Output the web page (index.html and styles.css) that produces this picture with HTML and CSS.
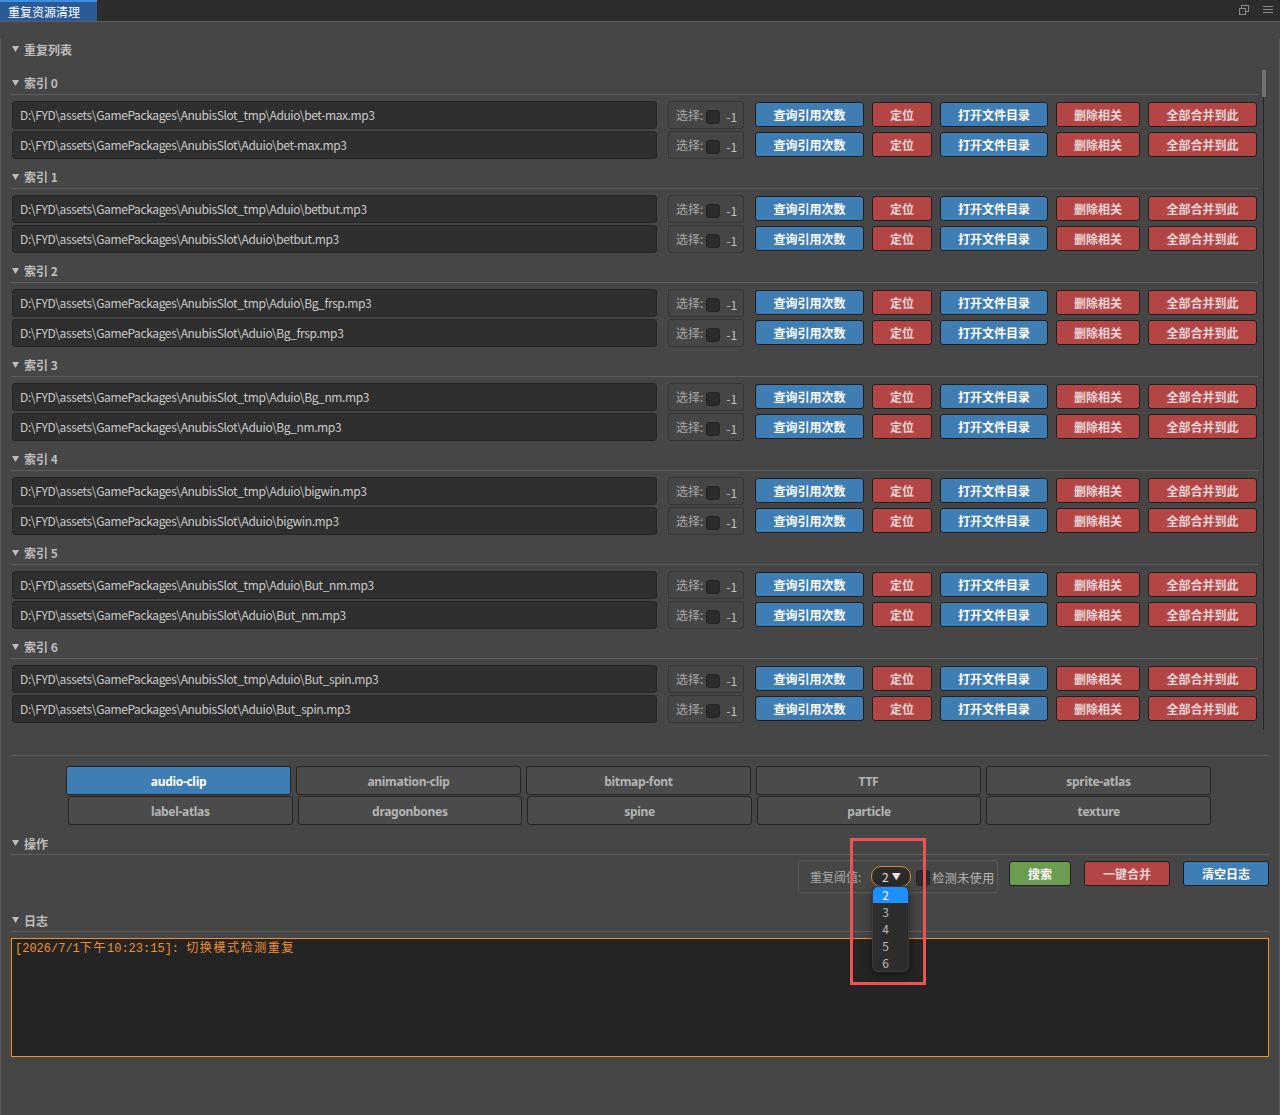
FILE: index.html
```html
<!DOCTYPE html>
<html lang="zh-CN">
<head>
<meta charset="utf-8">
<title>重复资源清理</title>
<link rel="stylesheet" href="styles.css">
</head>
<body>
<div class="titlebar">
  <div class="title-tab">重复资源清理</div>
  <div class="title-icons">
    <svg width="12" height="12" viewBox="0 0 12 12"><rect x="3.5" y="1.5" width="7" height="6" fill="none" stroke="#8a8a8a"/><rect x="1.5" y="4.5" width="6" height="6" fill="#2e2e2e" stroke="#8a8a8a"/></svg>
    <svg width="12" height="12" viewBox="0 0 12 12"><path d="M1 2.5h10M1 5.5h10M1 8.5h10" stroke="#8a8a8a" stroke-width="1.2"/></svg>
  </div>
</div>
<div class="panel">
  <div class="sec-head top"><svg class="tri" width="7" height="6" viewBox="0 0 7 6"><polygon points="0,0 7,0 3.5,6" fill="#bdbdbd"/></svg>重复列表</div>
  <div class="scroll">
    <div class="list">
      <div class="group">
        <div class="g-head"><svg class="tri" width="7" height="6" viewBox="0 0 7 6"><polygon points="0,0 7,0 3.5,6" fill="#bdbdbd"/></svg>索引 0</div>
        <div class="rows">
          <div class="row"><div class="path">D:\FYD\assets\GamePackages\AnubisSlot_tmp\Aduio\bet-max.mp3</div><div class="sel">选择:<span class="cb"></span><span class="num">-1</span></div><div class="btns"><span class="btn blue w1">查询引用次数</span><span class="btn red w2">定位</span><span class="btn blue w3">打开文件目录</span><span class="btn red w4">删除相关</span><span class="btn red w5">全部合并到此</span></div></div>
          <div class="row"><div class="path">D:\FYD\assets\GamePackages\AnubisSlot\Aduio\bet-max.mp3</div><div class="sel">选择:<span class="cb"></span><span class="num">-1</span></div><div class="btns"><span class="btn blue w1">查询引用次数</span><span class="btn red w2">定位</span><span class="btn blue w3">打开文件目录</span><span class="btn red w4">删除相关</span><span class="btn red w5">全部合并到此</span></div></div>
        </div>
      </div>
      <div class="group">
        <div class="g-head"><svg class="tri" width="7" height="6" viewBox="0 0 7 6"><polygon points="0,0 7,0 3.5,6" fill="#bdbdbd"/></svg>索引 1</div>
        <div class="rows">
          <div class="row"><div class="path">D:\FYD\assets\GamePackages\AnubisSlot_tmp\Aduio\betbut.mp3</div><div class="sel">选择:<span class="cb"></span><span class="num">-1</span></div><div class="btns"><span class="btn blue w1">查询引用次数</span><span class="btn red w2">定位</span><span class="btn blue w3">打开文件目录</span><span class="btn red w4">删除相关</span><span class="btn red w5">全部合并到此</span></div></div>
          <div class="row"><div class="path">D:\FYD\assets\GamePackages\AnubisSlot\Aduio\betbut.mp3</div><div class="sel">选择:<span class="cb"></span><span class="num">-1</span></div><div class="btns"><span class="btn blue w1">查询引用次数</span><span class="btn red w2">定位</span><span class="btn blue w3">打开文件目录</span><span class="btn red w4">删除相关</span><span class="btn red w5">全部合并到此</span></div></div>
        </div>
      </div>
      <div class="group">
        <div class="g-head"><svg class="tri" width="7" height="6" viewBox="0 0 7 6"><polygon points="0,0 7,0 3.5,6" fill="#bdbdbd"/></svg>索引 2</div>
        <div class="rows">
          <div class="row"><div class="path">D:\FYD\assets\GamePackages\AnubisSlot_tmp\Aduio\Bg_frsp.mp3</div><div class="sel">选择:<span class="cb"></span><span class="num">-1</span></div><div class="btns"><span class="btn blue w1">查询引用次数</span><span class="btn red w2">定位</span><span class="btn blue w3">打开文件目录</span><span class="btn red w4">删除相关</span><span class="btn red w5">全部合并到此</span></div></div>
          <div class="row"><div class="path">D:\FYD\assets\GamePackages\AnubisSlot\Aduio\Bg_frsp.mp3</div><div class="sel">选择:<span class="cb"></span><span class="num">-1</span></div><div class="btns"><span class="btn blue w1">查询引用次数</span><span class="btn red w2">定位</span><span class="btn blue w3">打开文件目录</span><span class="btn red w4">删除相关</span><span class="btn red w5">全部合并到此</span></div></div>
        </div>
      </div>
      <div class="group">
        <div class="g-head"><svg class="tri" width="7" height="6" viewBox="0 0 7 6"><polygon points="0,0 7,0 3.5,6" fill="#bdbdbd"/></svg>索引 3</div>
        <div class="rows">
          <div class="row"><div class="path">D:\FYD\assets\GamePackages\AnubisSlot_tmp\Aduio\Bg_nm.mp3</div><div class="sel">选择:<span class="cb"></span><span class="num">-1</span></div><div class="btns"><span class="btn blue w1">查询引用次数</span><span class="btn red w2">定位</span><span class="btn blue w3">打开文件目录</span><span class="btn red w4">删除相关</span><span class="btn red w5">全部合并到此</span></div></div>
          <div class="row"><div class="path">D:\FYD\assets\GamePackages\AnubisSlot\Aduio\Bg_nm.mp3</div><div class="sel">选择:<span class="cb"></span><span class="num">-1</span></div><div class="btns"><span class="btn blue w1">查询引用次数</span><span class="btn red w2">定位</span><span class="btn blue w3">打开文件目录</span><span class="btn red w4">删除相关</span><span class="btn red w5">全部合并到此</span></div></div>
        </div>
      </div>
      <div class="group">
        <div class="g-head"><svg class="tri" width="7" height="6" viewBox="0 0 7 6"><polygon points="0,0 7,0 3.5,6" fill="#bdbdbd"/></svg>索引 4</div>
        <div class="rows">
          <div class="row"><div class="path">D:\FYD\assets\GamePackages\AnubisSlot_tmp\Aduio\bigwin.mp3</div><div class="sel">选择:<span class="cb"></span><span class="num">-1</span></div><div class="btns"><span class="btn blue w1">查询引用次数</span><span class="btn red w2">定位</span><span class="btn blue w3">打开文件目录</span><span class="btn red w4">删除相关</span><span class="btn red w5">全部合并到此</span></div></div>
          <div class="row"><div class="path">D:\FYD\assets\GamePackages\AnubisSlot\Aduio\bigwin.mp3</div><div class="sel">选择:<span class="cb"></span><span class="num">-1</span></div><div class="btns"><span class="btn blue w1">查询引用次数</span><span class="btn red w2">定位</span><span class="btn blue w3">打开文件目录</span><span class="btn red w4">删除相关</span><span class="btn red w5">全部合并到此</span></div></div>
        </div>
      </div>
      <div class="group">
        <div class="g-head"><svg class="tri" width="7" height="6" viewBox="0 0 7 6"><polygon points="0,0 7,0 3.5,6" fill="#bdbdbd"/></svg>索引 5</div>
        <div class="rows">
          <div class="row"><div class="path">D:\FYD\assets\GamePackages\AnubisSlot_tmp\Aduio\But_nm.mp3</div><div class="sel">选择:<span class="cb"></span><span class="num">-1</span></div><div class="btns"><span class="btn blue w1">查询引用次数</span><span class="btn red w2">定位</span><span class="btn blue w3">打开文件目录</span><span class="btn red w4">删除相关</span><span class="btn red w5">全部合并到此</span></div></div>
          <div class="row"><div class="path">D:\FYD\assets\GamePackages\AnubisSlot\Aduio\But_nm.mp3</div><div class="sel">选择:<span class="cb"></span><span class="num">-1</span></div><div class="btns"><span class="btn blue w1">查询引用次数</span><span class="btn red w2">定位</span><span class="btn blue w3">打开文件目录</span><span class="btn red w4">删除相关</span><span class="btn red w5">全部合并到此</span></div></div>
        </div>
      </div>
      <div class="group">
        <div class="g-head"><svg class="tri" width="7" height="6" viewBox="0 0 7 6"><polygon points="0,0 7,0 3.5,6" fill="#bdbdbd"/></svg>索引 6</div>
        <div class="rows">
          <div class="row"><div class="path">D:\FYD\assets\GamePackages\AnubisSlot_tmp\Aduio\But_spin.mp3</div><div class="sel">选择:<span class="cb"></span><span class="num">-1</span></div><div class="btns"><span class="btn blue w1">查询引用次数</span><span class="btn red w2">定位</span><span class="btn blue w3">打开文件目录</span><span class="btn red w4">删除相关</span><span class="btn red w5">全部合并到此</span></div></div>
          <div class="row"><div class="path">D:\FYD\assets\GamePackages\AnubisSlot\Aduio\But_spin.mp3</div><div class="sel">选择:<span class="cb"></span><span class="num">-1</span></div><div class="btns"><span class="btn blue w1">查询引用次数</span><span class="btn red w2">定位</span><span class="btn blue w3">打开文件目录</span><span class="btn red w4">删除相关</span><span class="btn red w5">全部合并到此</span></div></div>
        </div>
      </div>
    </div>
    <div class="scrollbar"><div class="thumb"></div></div>
  </div>
  <div class="sep"></div>
  <div class="tabs">
    <div class="tab-row">
      <span class="tab active">audio-clip</span><span class="tab">animation-clip</span><span class="tab">bitmap-font</span><span class="tab">TTF</span><span class="tab">sprite-atlas</span>
    </div>
    <div class="tab-row second">
      <span class="tab">label-atlas</span><span class="tab">dragonbones</span><span class="tab">spine</span><span class="tab">particle</span><span class="tab">texture</span>
    </div>
  </div>
  <div class="sec-head line ops-head"><svg class="tri" width="7" height="6" viewBox="0 0 7 6"><polygon points="0,0 7,0 3.5,6" fill="#bdbdbd"/></svg>操作</div>
  <div class="ops">
    <div class="ops-box">
      <span class="lbl">重复阈值:</span>
      <div class="dd">
        <div class="dd-val">2 <span class="caret">▼</span></div>
        <div class="dd-menu">
          <div class="dd-item hl">2</div>
          <div class="dd-item">3</div>
          <div class="dd-item">4</div>
          <div class="dd-item">5</div>
          <div class="dd-item">6</div>
        </div>
      </div>
      <span class="cb2"></span>
      <span class="lbl2">检测未使用</span>
    </div>
    <span class="btn green ob1">搜索</span>
    <span class="btn red ob2">一键合并</span>
    <span class="btn blue ob3">清空日志</span>
  </div>
  <div class="sec-head line log-head"><svg class="tri" width="7" height="6" viewBox="0 0 7 6"><polygon points="0,0 7,0 3.5,6" fill="#bdbdbd"/></svg>日志</div>
  <div class="log">[2026/7/1<span class="cjk">下午</span>10:23:15]: <span class="cjk">切换模式检测重复</span></div>
</div>
<div class="annot"></div>
</body>
</html>
```
FILE: styles.css
```css
* { box-sizing: border-box; }
html, body { margin: 0; }
body {
  width: 1280px;
  height: 1115px;
  overflow: hidden;
  position: relative;
  background: #464646;
  font-family: "Noto Sans CJK SC", "Noto Sans", sans-serif;
  font-size: 12px;
  color: #c8c8c8;
}
.titlebar {
  height: 22px;
  background: #2d2d2d;
  border-bottom: 1px solid #5c5c5c;
  display: flex;
  justify-content: space-between;
  align-items: flex-start;
}
.title-tab {
  width: 97px;
  height: 21px;
  background: #2b5a98;
  border-top: 2px solid #3d8fe2;
  color: #fff;
  line-height: 19px;
  padding-left: 8px;
}
.title-icons {
  display: flex;
  gap: 12px;
  padding: 4px 6px 0 0;
}
.panel {
  height: 1093px;
  border: 1px solid #5a5a5a;
  border-top: none;
  border-radius: 0 0 4px 4px;
  padding: 0 10px;
}
.tri { flex: none; }
.sec-head {
  display: flex;
  align-items: center;
  gap: 5px;
  padding-left: 1px;
  font-weight: bold;
  color: #bdbdbd;
}
.sec-head.top { margin-top: 17px; height: 20px; }
.sec-head.line {
  height: 23px;
  border-bottom: 1px solid #5e5e5e;
}
.scroll {
  margin-top: 11px;
  height: 660px;
  display: flex;
  overflow: hidden;
}
.list { flex: 1; }
.scrollbar {
  width: 11px;
  position: relative;
  display: flex;
  justify-content: center;
}
.scrollbar::before {
  content: "";
  width: 1px;
  background: #262626;
  margin-left: -1px;
}
.thumb {
  position: absolute;
  left: 4px;
  top: 0;
  width: 4px;
  height: 27px;
  background: #717171;
}
.g-head {
  height: 25px;
  padding-top: 1px;
  border-bottom: 1px solid #5e5e5e;
  display: flex;
  align-items: center;
  gap: 5px;
  padding-left: 1px;
  font-weight: bold;
  color: #bdbdbd;
}
.rows {
  padding: 6px 1px 5px;
  display: flex;
  flex-direction: column;
  gap: 2px;
}
.row {
  height: 28px;
  display: flex;
  align-items: center;
  gap: 11px;
}
.path {
  flex: 1;
  height: 28px;
  background: #2f2f2f;
  border: 1px solid #262626;
  border-radius: 3px;
  line-height: 26px;
  padding-left: 7px;
  color: #cacaca;
  letter-spacing: -0.38px;
  white-space: nowrap;
  overflow: hidden;
}
.sel {
  width: 76px;
  height: 28px;
  border: 1px solid #353535;
  border-radius: 3px;
  display: flex;
  align-items: center;
  padding: 0 0 2px 7px;
  color: #a8a8a8;
}
.cb {
  width: 14px;
  height: 14px;
  margin: 5px 6px 0 3px;
  background: #2c2c2c;
  border: 1px solid #232323;
  border-radius: 3px;
}
.num { color: #c0c0c0; margin-top: 4px; }
.btns { display: flex; gap: 8px; align-self: flex-start; padding-top: 1px; }
.btn {
  height: 25px;
  border: 1px solid #1f1f1f;
  border-radius: 3px;
  display: flex;
  align-items: center;
  justify-content: center;
  font-weight: bold;
  color: #fff;
}
.blue { background: #3f7db5; }
.red { background: #b44545; color: #e8d6d6; }
.green { background: #6b9c51; }
.w1 { width: 109px; }
.w2 { width: 60px; }
.w3 { width: 108px; }
.w4 { width: 84px; }
.w5 { width: 109px; }
.sep {
  margin-top: 25px;
  border-top: 1px solid #5e5e5e;
}
.tabs {
  margin: 10px 0 0 55px;
  width: 1145px;
  display: flex;
  flex-direction: column;
  gap: 1px;
}
.tab-row {
  display: grid;
  grid-template-columns: repeat(5, 1fr);
  gap: 5px;
}
.tab-row.second { margin-left: 2px; }
.tab {
  height: 29px;
  background: #4b4b4b;
  border: 1px solid #252525;
  border-radius: 3px;
  display: flex;
  align-items: center;
  justify-content: center;
  padding-top: 1px;
  font-family: "Noto Sans", sans-serif;
  font-weight: bold;
  color: #b4b4b4;
  letter-spacing: -0.3px;
}
.tab.active { background: #3f7db5; color: #fff; }
.ops-head { margin-top: 7px; }
.ops {
  margin-top: 5px;
  height: 33px;
  display: flex;
  justify-content: flex-end;
  align-items: flex-start;
}
.ops-box {
  width: 200px;
  height: 33px;
  border: 1px solid #5a5a5a;
  border-radius: 3px;
  display: flex;
  align-items: center;
  padding-left: 11px;
  margin-right: 11px;
}
.lbl { color: #a8a8a8; margin-right: 10px; }
.dd { position: relative; }
.dd-val {
  width: 40px;
  height: 21px;
  border: 1px solid #d8892c;
  border-radius: 10px;
  background: #2c2c2c;
  color: #e0e0e0;
  display: flex;
  align-items: center;
  justify-content: center;
  gap: 3px;
}
.caret { font-size: 9px; color: #e8e8e8; }
.dd-menu {
  position: absolute;
  left: 1px;
  top: 20px;
  width: 37px;
  background: #2d2d2d;
  border: 1px solid #3c3c3c;
  border-radius: 6px;
  overflow: hidden;
  box-shadow: 0 2px 8px rgba(0, 0, 0, 0.45);
  z-index: 2;
}
.dd-item {
  height: 17px;
  padding: 1px 0 0 9px;
  line-height: 16px;
  color: #b8b8b8;
}
.dd-item.hl { background: #1e8fff; color: #fff; height: 16px; padding-top: 0; line-height: 15px; }
.cb2 {
  width: 14px;
  height: 16px;
  margin: 3px 2px 0 5px;
  background: #2c2c2c;
  border: 1px solid #232323;
  border-radius: 3px;
}
.lbl2 { color: #b8b8b8; margin-top: 2px; letter-spacing: 0.5px; }
.ops .btn { margin-top: 1px; height: 25px; }
.ob1 { width: 62px; margin-right: 13px; }
.ob2 { width: 86px; margin-right: 13px; }
.ob3 { width: 86px; }
.log-head { margin-top: 16px; }
.log {
  margin-top: 6px;
  height: 119px;
  background: #242424;
  border: 1px solid #ef9031;
  padding: 1px 3px;
  font-family: "Liberation Mono", "Noto Sans CJK SC", monospace;
  font-size: 12px;
  line-height: 18px;
  color: #ef9031;
}
.cjk { letter-spacing: 1.6px; }
.annot {
  position: absolute;
  left: 850px;
  top: 838px;
  width: 76px;
  height: 147px;
  border: 3px solid #ee5252;
  z-index: 3;
}
```
